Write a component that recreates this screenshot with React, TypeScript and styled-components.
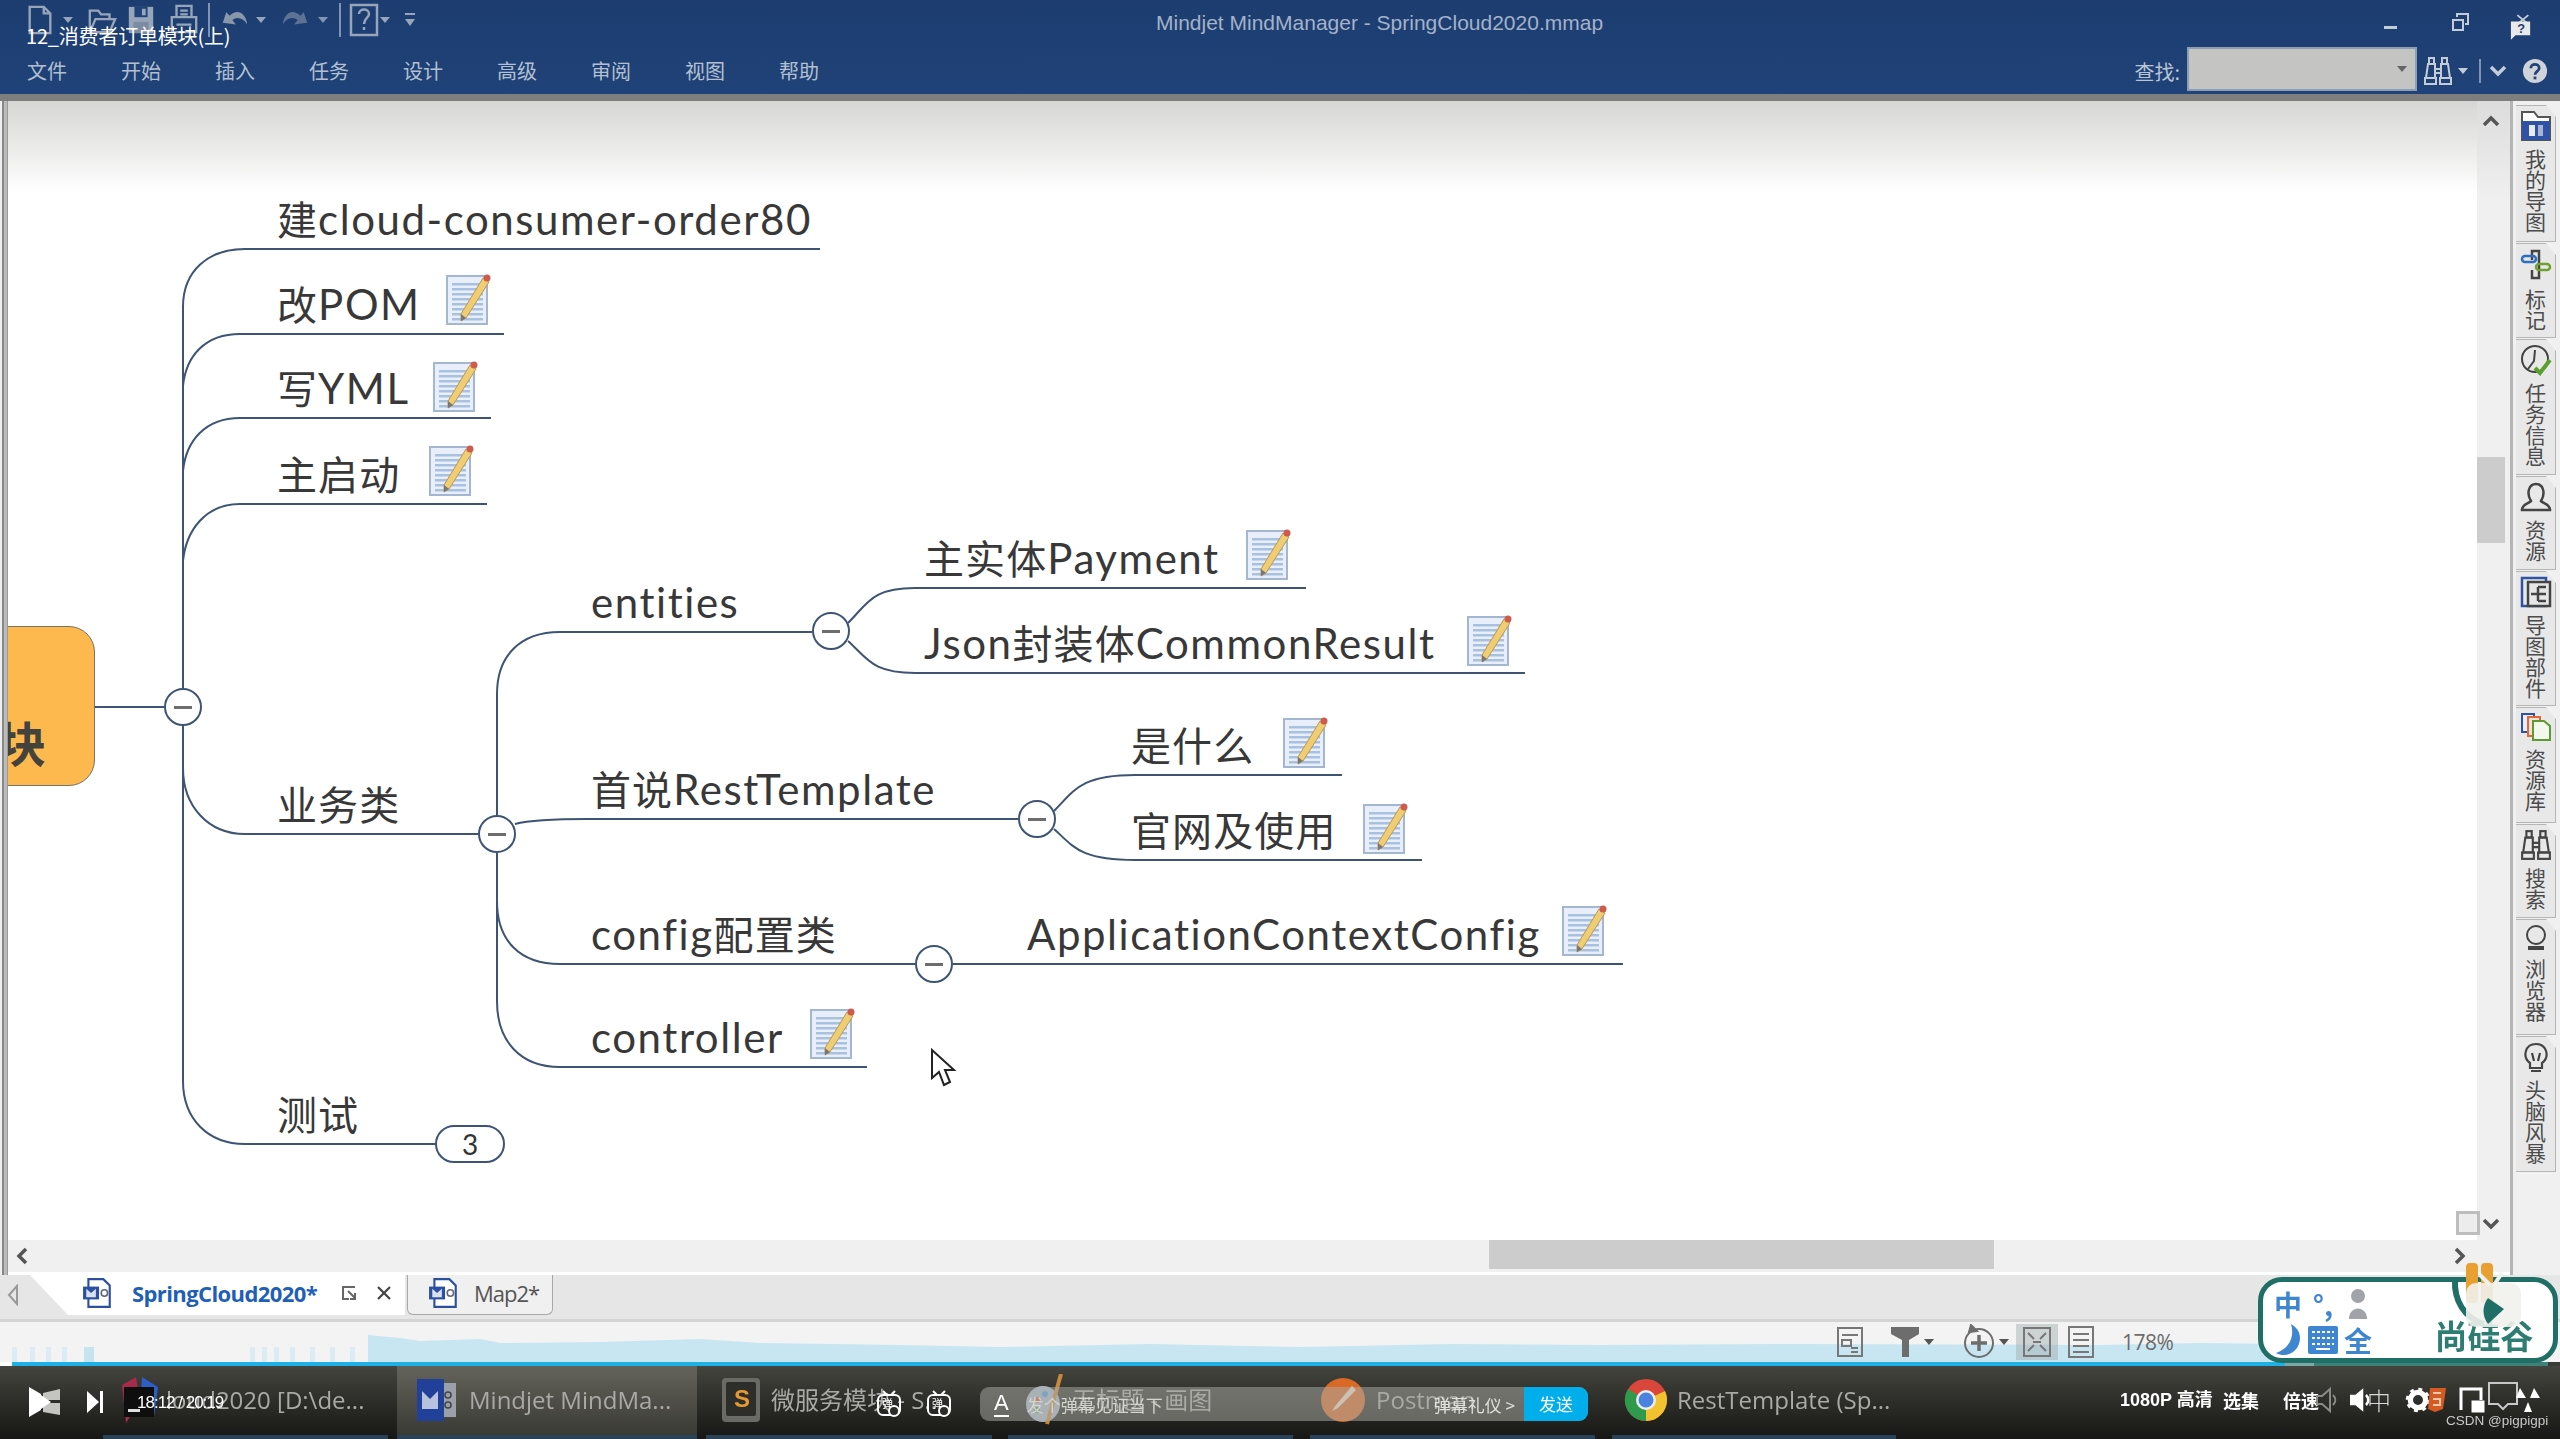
import React from "react";
import styled, { createGlobalStyle } from "styled-components";

const CJK = '"Noto Sans CJK SC", "Noto Sans", sans-serif';
const LATIN = 'Lato, "Noto Sans CJK SC", sans-serif';
const UI = '"Liberation Sans", "Noto Sans CJK SC", sans-serif';
const OX = 8;
const OY = 101;

const Global = createGlobalStyle`
  html, body { margin: 0; padding: 0; background: #fff; }
  #root { width: 2560px; height: 1439px; overflow: hidden; }
`;

const Frame = styled.div`
  position: relative;
  width: 2560px;
  height: 1439px;
  display: flex;
  flex-direction: column;
  overflow: hidden;
  font-family: ${CJK};
  filter: blur(0.45px);
`;

/* ---------- header ---------- */
const Header = styled.header`
  height: 94px;
  flex: none;
  display: flex;
  flex-direction: column;
  background: linear-gradient(180deg, #1d3d70 0%, #1f4278 100%);
`;
const TitleRow = styled.div`
  height: 44px;
  display: flex;
  align-items: center;
  position: relative;
`;
const Qat = styled.div`
  display: flex;
  align-items: center;
  padding: 0 0 5px 26px;
`;
const Slot = styled.span<{ $ml?: number; $mb?: number }>`
  display: flex;
  align-items: center;
  flex: none;
  margin-left: ${(p) => p.$ml ?? 0}px;
  margin-bottom: ${(p) => p.$mb ?? 0}px;
`;
const Title = styled.div`
  position: absolute;
  left: 1156px;
  top: 10px;
  font: 21px/26px ${UI};
  color: #a3b2c8;
  white-space: nowrap;
`;
const VideoTitle = styled.div`
  position: absolute;
  left: 26px;
  top: 23px;
  font: 20px/26px ${CJK};
  letter-spacing: -0.2px;
  color: #fff;
  white-space: nowrap;
`;
const WinControls = styled.div`
  margin-left: auto;
  height: 44px;
  box-sizing: border-box;
  display: flex;
  align-items: flex-end;
  padding: 0 28px 4px 0;
`;
const MenuRow = styled.nav`
  height: 50px;
  display: flex;
  align-items: center;
  padding: 4px 12px 0 27px;
  box-sizing: border-box;
`;
const MenuItem = styled.span`
  width: 94px;
  font-size: 20px;
  line-height: 26px;
  color: #b2c0d2;
`;
const FindLabel = styled.span`
  margin-left: auto;
  font-size: 20px;
  color: #b8c4d4;
  margin-right: 7px;
`;
const FindBox = styled.div`
  width: 230px;
  height: 44px;
  margin-top: -4px;
  box-sizing: border-box;
  background: #c4c4c2;
  border: 2px solid #8d9db4;
  display: flex;
  align-items: center;
  justify-content: flex-end;
  padding-right: 8px;
`;
const FindTools = styled.div`
  display: flex;
  align-items: center;
  padding-left: 6px;
`;
const Divider = styled.span`
  width: 2px;
  height: 24px;
  background: #7f93b2;
`;
const Caret = styled.span<{ $c?: string }>`
  display: block;
  width: 0;
  height: 0;
  border-left: 5px solid transparent;
  border-right: 5px solid transparent;
  border-top: 6px solid ${(p) => p.$c || "#c4ccd8"};
`;

/* ---------- main ---------- */
const Main = styled.main`
  height: 1181px;
  flex: none;
  display: flex;
  background: #f0f0f0;
  border-top: 7px solid #7e7e7e;
  box-sizing: border-box;
`;
const Workspace = styled.div`
  width: 2510px;
  display: flex;
  flex-direction: column;
  padding-left: 8px;
  box-sizing: border-box;
  background: linear-gradient(90deg, #eee 0 2px, #888 2px 4px, #bbb 4px 7px, #999 7px 8px);
`;
const ViewRow = styled.div`
  height: 1139px;
  display: flex;
`;
const Canvas = styled.div`
  position: relative;
  width: 2469px;
  overflow: hidden;
  background: linear-gradient(180deg, #d6d6d4 0, #fff 92px);
`;
const Wires = styled.svg`
  position: absolute;
  left: 0;
  top: 1px;
`;
const Central = styled.div`
  position: absolute;
  left: -30px;
  top: ${626 - OY}px;
  width: ${95 + 30 - OX}px;
  height: 160px;
  box-sizing: border-box;
  background: #fdb94e;
  border: 1px solid #77736a;
  border-radius: 26px;
  display: flex;
  align-items: flex-end;
  justify-content: flex-start;
  padding: 0 0 14px 19px;
  font: 700 48px/60px ${CJK};
  color: #44423c;
`;
const Topic = styled.div<{ $x: number; $line: number }>`
  position: absolute;
  left: ${(p) => p.$x - OX}px;
  top: ${(p) => p.$line - OY - 55}px;
  font: 40px/50px ${CJK};
  letter-spacing: 1.1px;
  color: #383838;
  white-space: nowrap;
`;
const LatinRun = styled.span`
  font-family: ${LATIN};
  font-size: 42px;
  letter-spacing: 1.55px;
`;
const NotePlace = styled.div<{ $x: number; $y: number }>`
  position: absolute;
  left: ${(p) => p.$x - OX}px;
  top: ${(p) => p.$y - OY}px;
  width: 46px;
  height: 52px;
`;
const Collapse = styled.div<{ $x: number; $y: number }>`
  position: absolute;
  left: ${(p) => p.$x - OX - 19}px;
  top: ${(p) => p.$y - OY - 18}px;
  width: 38px;
  height: 38px;
  box-sizing: border-box;
  border: 2px solid #3e5474;
  border-radius: 50%;
  background: #fff;
  display: flex;
  align-items: center;
  justify-content: center;
  &::after {
    content: "";
    width: 18px;
    height: 3px;
    background: #6d6d6d;
  }
`;
const CountBadge = styled.div`
  position: absolute;
  left: ${435 - OX}px;
  top: ${1125 - OY}px;
  width: 70px;
  height: 38px;
  box-sizing: border-box;
  border: 2px solid #3e5474;
  border-radius: 19px;
  background: #fff;
  font: 28px/34px ${LATIN};
  color: #333;
  text-align: center;
`;
const Pointer = styled.svg`
  position: absolute;
  left: ${929 - OX}px;
  top: ${1048 - OY}px;
`;
const VScroll = styled.div`
  width: 33px;
  display: flex;
  flex-direction: column;
  align-items: center;
  padding: 12px 5px 6px 0;
  box-sizing: border-box;
  background: linear-gradient(180deg, #dcdcdc 0, #f0f0f0 100px);
`;
const VThumb = styled.div`
  width: 28px;
  height: 86px;
  margin-top: 324px;
  background: #cccccc;
`;
const CornerRow = styled.div`
  margin-top: auto;
  display: flex;
  align-items: center;
  position: relative;
`;
const ResizeBox = styled.div`
  position: absolute;
  right: 21px;
  top: -3px;
  width: 24px;
  height: 24px;
  box-sizing: border-box;
  border: 3px solid #bdbdbd;
  background: #ececec;
`;
const HScroll = styled.div`
  height: 32px;
  display: flex;
  align-items: center;
  padding: 0 41px 0 5px;
  background: #f0f0f0;
  border-bottom: 3px solid #fff;
  box-sizing: content-box;
`;
const HThumb = styled.div`
  width: 505px;
  height: 29px;
  margin: 0 auto 3px 1456px;
  background: #cccccc;
`;

/* ---------- sidebar ---------- */
const SideBar = styled.aside`
  width: 50px;
  box-sizing: border-box;
  padding: 4px 4px 0 3px;
  display: flex;
  flex-direction: column;
  gap: 1px;
  background: #f0f0f0;
  border-left: 3px solid #b4b4b4;
`;
const SideTab = styled.div<{ $h: number }>`
  height: ${(p) => p.$h}px;
  flex: none;
  box-sizing: border-box;
  display: flex;
  flex-direction: column;
  align-items: center;
  padding-top: 4px;
  background: #e8e8e8;
  border: 1px solid #b5b5b5;
  border-left: none;
  clip-path: polygon(0 0, 30px 0, 100% 12px, 100% 100%, 0 100%);
`;
const SideLabel = styled.span`
  writing-mode: vertical-rl;
  text-orientation: upright;
  white-space: nowrap;
  font-size: 21px;
  line-height: 24px;
  letter-spacing: 0;
  margin-top: 7px;
  color: #4c4c4c;
`;

/* ---------- tabs & status ---------- */
const TabRow = styled.div`
  position: relative;
  height: 47px;
  flex: none;
  display: flex;
  align-items: flex-start;
  background: #e6e6e6;
  border-bottom: 3px solid #d4d4d4;
  box-sizing: border-box;
`;
const TabArrow = styled.div`
  width: 30px;
  height: 40px;
  display: flex;
  align-items: center;
  padding-left: 7px;
  box-sizing: border-box;
`;
const ActiveTab = styled.div`
  width: 375px;
  height: 40px;
  display: flex;
  align-items: center;
  box-sizing: border-box;
  padding: 0 0 4px 52px;
  background: #fff;
  clip-path: polygon(0 0, 100% 0, 100% 100%, 38px 100%);
  font: 700 22px/30px "Open Sans", ${UI};
  color: #1f5fb8;
`;
const TabName = styled.span`
  margin-left: 18px;
  width: 210px;
  letter-spacing: -0.6px;
  white-space: nowrap;
`;
const OtherTab = styled.div`
  margin-left: 2px;
  width: 146px;
  height: 40px;
  box-sizing: border-box;
  display: flex;
  align-items: center;
  padding: 0 0 4px 20px;
  background: #f0f0f0;
  border: 1px solid #a8a8a8;
  border-top: none;
  border-radius: 0 0 6px 6px;
  font: 22px/30px "Open Sans", ${UI};
  color: #555;
`;
const OtherName = styled.span`
  margin-left: 14px;
  letter-spacing: -1px;
`;
const StatusRow = styled.div`
  position: relative;
  height: 40px;
  flex: none;
  background: #f3f3f3;
  display: flex;
  align-items: center;
  padding-left: 1836px;
`;
const Wave = styled.svg`
  position: absolute;
  left: 0;
  top: 0;
`;
const ToolSlot = styled.div<{ $w: number; $on?: boolean; $ml?: number }>`
  position: relative;
  width: ${(p) => p.$w}px;
  height: 36px;
  margin-left: ${(p) => p.$ml ?? 0}px;
  display: flex;
  align-items: center;
  justify-content: center;
  gap: 4px;
  background: ${(p) => (p.$on ? "rgba(160,170,170,0.45)" : "transparent")};
`;
const Zoom = styled.span`
  position: relative;
  margin-left: 24px;
  font: 21px/26px "Open Sans", ${UI};
  color: #6b6b6b;
  letter-spacing: -0.5px;
`;
const Progress = styled.div`
  height: 4px;
  flex: none;
  background: linear-gradient(90deg, #fff 0 12px, #1fb0e6 12px 2285px, #7da9a4 2285px 2314px, #3f8077 2314px 2548px, #3a3a36 2548px);
`;

/* ---------- taskbar ---------- */
const TaskBar = styled.footer`
  position: relative;
  height: 73px;
  flex: none;
  display: flex;
  padding-left: 103px;
  background: linear-gradient(180deg, #45453f 0%, #2c2c28 50%, #171715 100%);
`;
const TaskItem = styled.div<{ $w: number; $on?: boolean; $pad?: number; $gap?: number; $ml?: number }>`
  width: ${(p) => p.$w}px;
  margin-left: ${(p) => p.$ml ?? 0}px;
  box-sizing: border-box;
  display: flex;
  align-items: center;
  gap: ${(p) => p.$gap ?? 10}px;
  padding: 0 0 2px ${(p) => p.$pad ?? 14}px;
  border-bottom: 4px solid #2a4258;
  background: ${(p) => (p.$on ? "linear-gradient(180deg,#64635b,#3a3a35)" : "transparent")};
  font: 24px/32px "Open Sans", ${UI};
  color: #a9a9a5;
  white-space: nowrap;
  overflow: hidden;
`;
const PlayBtn = styled.div`
  position: absolute;
  left: 29px;
  top: 21px;
  display: flex;
  align-items: center;
  gap: 25px;
`;
const TimeText = styled.span`
  position: absolute;
  left: 137px;
  top: 26px;
  font: 17px/22px ${UI};
  letter-spacing: -1px;
  color: #fff;
  white-space: nowrap;
`;
const DanmakuToggle = styled.div`
  position: absolute;
  left: 876px;
  top: 24px;
  display: flex;
  gap: 24px;
`;
const DanmakuBar = styled.div`
  position: absolute;
  left: 980px;
  top: 21px;
  width: 608px;
  height: 34px;
  display: flex;
  align-items: center;
  border-radius: 9px;
  overflow: hidden;
  background: rgba(170, 170, 165, 0.52);
  color: #e8e8e8;
`;
const DanmakuA = styled.span`
  margin-left: 14px;
  font: 22px/24px ${UI};
  border-bottom: 2px solid #fff;
  height: 24px;
  color: #fff;
`;
const DanmakuHint = styled.span`
  margin-left: 18px;
  font-size: 17px;
  color: #d4d4d0;
`;
const DanmakuRule = styled.span`
  margin-left: auto;
  margin-right: 9px;
  font-size: 17px;
  color: #e0e0dc;
`;
const SendBtn = styled.div`
  width: 64px;
  height: 34px;
  background: #00aeec;
  color: #fff;
  font: 17px/34px ${CJK};
  text-align: center;
`;
const PlayerTools = styled.div`
  position: absolute;
  left: 2120px;
  top: 16px;
  height: 36px;
  display: flex;
  align-items: center;
  color: #fff;
  font-weight: 700;
  font-size: 18px;
  line-height: 26px;
`;
const ToolText = styled.span<{ $w: number; $b?: boolean }>`
  width: ${(p) => p.$w}px;
  flex: none;
  white-space: nowrap;
  font-family: ${(p) => (p.$b ? UI : CJK)};
`;
const ImeChar = styled.span`
  margin-left: -5px;
  width: 24px;
  flex: none;
  font-weight: 300;
  font-size: 24px;
  color: #d8d8d8;
`;
const Watermark = styled.span`
  position: absolute;
  left: 2446px;
  top: 46px;
  font: 13.5px/18px ${UI};
  color: #c8c8c8;
  white-space: nowrap;
`;

/* ---------- logo overlay ---------- */
const LogoBox = styled.div`
  position: absolute;
  left: 2258px;
  top: 1277px;
  width: 300px;
  height: 86px;
  box-sizing: border-box;
  border: 5px solid #1f6f66;
  border-radius: 24px;
  background: #fff;
  display: flex;
  padding: 4px 17px 0 10px;
`;
const ImeGrid = styled.div`
  width: 120px;
  display: grid;
  grid-template-columns: repeat(3, 30px);
  grid-auto-rows: 36px;
  gap: 0 5px;
  align-items: center;
  justify-items: center;
  color: #3e86d0;
  font: 700 28px/36px ${CJK};
`;
const Brand = styled.div`
  margin-left: auto;
  width: 104px;
  display: flex;
  flex-direction: column;
  align-items: center;
  justify-content: flex-end;
  padding-bottom: 4px;
  font: 700 33px/38px ${CJK};
  color: #2e7d72;
  white-space: nowrap;
`;
const BrandMark = styled.svg`
  position: absolute;
  left: 2450px;
  top: 1258px;
`;

/* ---------- drawings ---------- */
const NoteIcon = () => (
  <svg width="46" height="52" viewBox="0 0 46 52">
    <rect x="1" y="3" width="40" height="48" fill="#e8eefa" stroke="#a3b6d2" strokeWidth="2" />
    {[10, 15, 20, 25, 30, 35, 40, 45].map((y) => (
      <rect key={y} x="6" y={y} width="31" height="2.5" fill="#a9c1e0" />
    ))}
    <path d="M37 5 L43 9 L20 45 L15 48 L15 41 Z" fill="#f0cc72" stroke="#b69a55" strokeWidth="1" />
    <path d="M15 41 L20 45 L15 48 Z" fill="#777" />
    <circle cx="41" cy="5" r="3.5" fill="#cf5b4c" />
  </svg>
);

const DocMini = () => (
  <svg width="32" height="32" viewBox="0 0 30 30">
    <path d="M6 2 H20 L26 8 V28 H6 Z" fill="#fff" stroke="#2c50a0" strokeWidth="2" />
    <rect x="1" y="9" width="15" height="12" fill="#2c50a0" />
    <path d="M4 11 L8.5 15 L13 11 V19 H4 Z" fill="#d8e0f0" />
    <circle cx="21" cy="15" r="3" fill="none" stroke="#667" strokeWidth="1.5" />
  </svg>
);

const Chevron = ({ d, c = "#555" }: { d: "u" | "d" | "l" | "r"; c?: string }) => {
  const paths = {
    u: "M3 12 L10 5 L17 12",
    d: "M3 6 L10 13 L17 6",
    l: "M13 3 L6 10 L13 17",
    r: "M7 3 L14 10 L7 17",
  };
  return (
    <svg width="20" height="20" viewBox="0 0 20 20">
      <path d={paths[d]} fill="none" stroke={c} strokeWidth="3.5" />
    </svg>
  );
};

const Binoculars = ({ c = "#c4ccd8", s = 30 }: { c?: string; s?: number }) => (
  <svg width={s} height={s} viewBox="0 0 30 30" fill="none" stroke={c} strokeWidth="2">
    <rect x="6" y="2" width="5" height="6" />
    <rect x="19" y="2" width="5" height="6" />
    <path d="M5 8 H12 V22 H3 Z M18 8 H25 L27 22 H18 Z M12 13 H18 M12 17 H18" />
    <rect x="2" y="22" width="11" height="6" />
    <rect x="17" y="22" width="11" height="6" />
  </svg>
);

const QC = "#97a5ba";
const QatIcons = () => (
  <>
    <Slot>
      <svg width="28" height="30" viewBox="0 0 28 32" fill="none" stroke={QC} strokeWidth="2.5">
        <path d="M3 2 H18 L25 9 V30 H3 Z M18 2 V9 H25" />
      </svg>
    </Slot>
    <Slot $ml={9}><Caret $c={QC} /></Slot>
    <Slot $ml={13}>
      <svg width="32" height="30" viewBox="0 0 32 32" fill="none" stroke={QC} strokeWidth="2.5">
        <path d="M3 29 V6 H12 L15 10 H24 V15 M3 29 L9 15 H30 L24 29 Z" />
      </svg>
    </Slot>
    <Slot $ml={8}>
      <svg width="30" height="30" viewBox="0 0 30 32">
        <path d="M2 2 H28 V30 H2 Z" fill={QC} />
        <rect x="8" y="2" width="14" height="11" fill="#1f4278" />
        <rect x="16" y="4" width="4" height="7" fill={QC} />
        <rect x="7" y="18" width="16" height="12" fill="#7d8ba0" />
      </svg>
    </Slot>
    <Slot $ml={13}>
      <svg width="30" height="32" viewBox="0 0 32 34" fill="none" stroke={QC} strokeWidth="2.5">
        <path d="M8 14 V2 H24 V14 M3 14 H29 V30 H3 Z M12 7 H20 M12 11 H20 M8 22 H24" />
      </svg>
    </Slot>
    <Slot $ml={9}><svg width="2" height="34"><rect width="2" height="34" fill="#7f93b2" /></svg></Slot>
    <Slot $ml={11}>
      <svg width="28" height="28" viewBox="0 0 32 30">
        <path d="M2 18 L6 6 L10 10 C18 2 28 6 30 20 C25 12 18 11 13 15 L17 20 Z" fill="#8997ab" />
      </svg>
    </Slot>
    <Slot $ml={7}><Caret $c={QC} /></Slot>
    <Slot $ml={15}>
      <svg width="28" height="28" viewBox="0 0 32 30">
        <path d="M30 18 L26 6 L22 10 C14 2 4 6 2 20 C7 12 14 11 19 15 L15 20 Z" fill="#5d7294" />
      </svg>
    </Slot>
    <Slot $ml={9}><Caret $c="#7f93b2" /></Slot>
    <Slot $ml={11}><svg width="2" height="34"><rect width="2" height="34" fill="#7f93b2" /></svg></Slot>
    <Slot $ml={8}>
      <svg width="30" height="34" viewBox="0 0 30 34" fill="none" stroke={QC} strokeWidth="2.5">
        <rect x="2" y="2" width="26" height="30" />
        <path d="M10 11 C10 5 20 5 20 11 C20 15 15 15 15 21 M15 24 V27" />
      </svg>
    </Slot>
    <Slot $ml={1}><Caret $c={QC} /></Slot>
    <Slot $ml={13}>
      <svg width="14" height="18" viewBox="0 0 14 18">
        <rect x="2" y="2" width="10" height="2" fill={QC} />
        <path d="M2 8 H12 L7 15 Z" fill={QC} />
      </svg>
    </Slot>
  </>
);

const sideTabs: { h: number; label: string; icon: React.ReactNode }[] = [
  {
    h: 137,
    label: "我的导图",
    icon: (
      <svg width="32" height="32" viewBox="0 0 32 32">
        <path d="M2 30 V2 H14 L18 7 H30 V30 Z" fill="#fff" stroke="#555" strokeWidth="2" />
        <rect x="2" y="11" width="28" height="19" fill="#2f52a4" />
        <rect x="9" y="15" width="6" height="11" fill="#e8eaf2" />
        <rect x="18" y="15" width="5" height="11" fill="#a7b4d6" />
      </svg>
    ),
  },
  {
    h: 95,
    label: "标记",
    icon: (
      <svg width="32" height="34" viewBox="0 0 32 34" fill="none" strokeWidth="2.5">
        <path d="M12 12 V3 H19 V30 H12 V22" stroke="#444" />
        <rect x="2" y="8" width="14" height="6" rx="3" stroke="#2e6fc0" />
        <rect x="16" y="16" width="14" height="6" rx="3" stroke="#6fa030" />
      </svg>
    ),
  },
  {
    h: 136,
    label: "任务信息",
    icon: (
      <svg width="32" height="32" viewBox="0 0 32 32" fill="none">
        <circle cx="15" cy="15" r="13" stroke="#444" strokeWidth="2" />
        <path d="M15 6 L14 17 L8 25" stroke="#444" strokeWidth="2" />
        <path d="M15 24 L20 29 L30 16" stroke="#5aa02c" strokeWidth="4" />
      </svg>
    ),
  },
  {
    h: 94,
    label: "资源",
    icon: (
      <svg width="32" height="32" viewBox="0 0 32 32" fill="none" stroke="#444" strokeWidth="2.5">
        <path d="M11 20 C6 12 9 3 16 3 C23 3 26 12 21 20 C24 23 30 23 30 29 H2 C2 23 8 23 11 20 Z" />
      </svg>
    ),
  },
  {
    h: 135,
    label: "导图部件",
    icon: (
      <svg width="32" height="32" viewBox="0 0 32 32" fill="none" stroke="#444" strokeWidth="2.5">
        <rect x="2" y="2" width="24" height="28" stroke="#2f52a4" />
        <rect x="8" y="6" width="22" height="24" fill="#e6e6e6" />
        <path d="M11 18 H18 M18 11 V25 M18 11 H26 M18 18 H26 M18 25 H26" />
      </svg>
    ),
  },
  {
    h: 116,
    label: "资源库",
    icon: (
      <svg width="32" height="30" viewBox="0 0 32 30" strokeWidth="2">
        <path d="M2 2 H14 V20 H2 Z" fill="#e8eefc" stroke="#2f52a4" />
        <path d="M8 5 H20 V24 H8 Z" fill="#fbe0d6" stroke="#e0683c" />
        <path d="M13 9 H24 L30 14 V28 H13 Z" fill="#f3f8ec" stroke="#5d9a34" />
      </svg>
    ),
  },
  { h: 94, label: "搜索", icon: <Binoculars c="#444" s={32} /> },
  {
    h: 116,
    label: "浏览器",
    icon: (
      <svg width="32" height="28" viewBox="0 0 32 28" fill="none" stroke="#444" strokeWidth="2">
        <circle cx="16" cy="11" r="9" />
        <path d="M8 24 H24" strokeWidth="4" />
      </svg>
    ),
  },
  {
    h: 136,
    label: "头脑风暴",
    icon: (
      <svg width="32" height="32" viewBox="0 0 32 32" fill="none" stroke="#444" strokeWidth="2.2">
        <path d="M10 22 C2 16 5 3 16 3 C27 3 30 16 22 22 V27 H10 Z" />
        <path d="M12 12 L14 20 M20 12 L18 20 M11 30 H21" />
      </svg>
    ),
  },
];

const wires = [
  "M183 306 V687 M183 725 V1080",
  "M183 306 C183 270 208 248 245 248 H820",
  "M183 385 C186 355 205 333 240 333 H504",
  "M183 470 C186 440 205 417 240 417 H491",
  "M183 560 C186 530 205 503 240 503 H487",
  "M95 706 H165",
  "M183 767 C183 805 208 833 245 833 H478",
  "M183 1080 C183 1118 208 1143 245 1143 H436",
  "M497 693 V814 M497 852 V1000",
  "M497 693 C497 655 520 631 560 631 H812",
  "M515 823 C530 819 550 818 588 818 H1018",
  "M497 900 C497 940 520 963 560 963 H915",
  "M953 963 H1623",
  "M497 1000 C497 1040 520 1066 560 1066 H867",
  "M848 622 C868 602 872 587 915 587 H1306",
  "M848 640 C868 658 872 672 915 672 H1525",
  "M1054 810 C1074 790 1080 774 1135 774 H1342",
  "M1054 828 C1074 846 1080 859 1135 859 H1422",
];

const topics: { x: number; line: number; text: string }[] = [
  { x: 277, line: 248, text: "建cloud-consumer-order80" },
  { x: 277, line: 333, text: "改POM" },
  { x: 277, line: 417, text: "写YML" },
  { x: 277, line: 503, text: "主启动" },
  { x: 277, line: 833, text: "业务类" },
  { x: 277, line: 1143, text: "测试" },
  { x: 591, line: 631, text: "entities" },
  { x: 591, line: 818, text: "首说RestTemplate" },
  { x: 591, line: 963, text: "config配置类" },
  { x: 591, line: 1066, text: "controller" },
  { x: 924, line: 587, text: "主实体Payment" },
  { x: 924, line: 672, text: "Json封装体CommonResult" },
  { x: 1131, line: 774, text: "是什么" },
  { x: 1131, line: 859, text: "官网及使用" },
  { x: 1027, line: 963, text: "ApplicationContextConfig" },
];

const notes = [
  [446, 273],
  [433, 360],
  [429, 444],
  [1246, 528],
  [1467, 614],
  [1283, 716],
  [1363, 802],
  [1562, 904],
  [810, 1007],
];

const collapses = [
  [183, 706],
  [497, 833],
  [831, 630],
  [1037, 818],
  [934, 963],
];

const TopicText = ({ text }: { text: string }) => (
  <>
    {text.split(/([\x00-\x7f]+)/).map((part, i) =>
      i % 2 === 1 ? <LatinRun key={i}>{part}</LatinRun> : part
    )}
  </>
);

const MindMap = () => (
  <>
    <Wires width="2469" height="1139" viewBox={`${OX} ${OY} 2469 1139`} fill="none" stroke="#3e5474" strokeWidth="2">
      {wires.map((d) => (
        <path key={d} d={d} />
      ))}
    </Wires>
    <Central>块</Central>
    {topics.map((t) => (
      <Topic key={t.text} $x={t.x} $line={t.line}>
        <TopicText text={t.text} />
      </Topic>
    ))}
    {notes.map(([x, y]) => (
      <NotePlace key={`${x}-${y}`} $x={x} $y={y}>
        <NoteIcon />
      </NotePlace>
    ))}
    {collapses.map(([x, y]) => (
      <Collapse key={`${x}-${y}`} $x={x} $y={y} />
    ))}
    <CountBadge>3</CountBadge>
    <Pointer width="28" height="40" viewBox="0 0 28 40">
      <path d="M3 2 V30 L10 24 L15 37 L21 34 L16 22 L25 22 Z" fill="#fff" stroke="#222" strokeWidth="2" />
    </Pointer>
  </>
);

const WaveChart = () => (
  <Wave width="2560" height="40" viewBox="0 1322 2560 40">
    {[12, 30, 46, 62, 250, 262, 274, 290, 310, 330, 350].map((x) => (
      <rect key={x} x={x} y="1347" width="5" height="15" fill="#dcecf4" />
    ))}
    <rect x="84" y="1347" width="10" height="15" fill="#c6e4f0" />
    <path
      d="M368 1362 V1335 L400 1338 L420 1341 L480 1339 L500 1343 L600 1342 L700 1339 L760 1343 L900 1345 L1000 1347 L1150 1344 L1300 1347 L1450 1344 L1600 1345 L1800 1344 L2100 1345 L2200 1343 L2285 1344 V1362 Z"
      fill="#c8e6f1"
    />
  </Wave>
);

export default function App() {
  return (
    <Frame>
      <Global />
      <Header>
        <TitleRow>
          <Qat>
            <QatIcons />
          </Qat>
          <Title>Mindjet MindManager - SpringCloud2020.mmap</Title>
          <VideoTitle>12_消费者订单模块(上)</VideoTitle>
          <WinControls>
            <Slot $mb={10}>
              <svg width="13" height="4"><rect width="13" height="3" fill="#c4ccd8" /></svg>
            </Slot>
            <Slot $ml={55} $mb={8}>
              <svg width="18" height="20" viewBox="0 0 18 20" fill="none" stroke="#c4ccd8" strokeWidth="2">
                <rect x="1" y="8" width="10" height="10" />
                <path d="M5 5 V2 H16 V12 H13" />
              </svg>
            </Slot>
            <Slot $ml={40}>
              <svg width="22" height="26" viewBox="0 0 24 28">
                <path d="M8 1 L20 11 M20 1 L8 11" stroke="#c4ccd8" strokeWidth="2" />
                <path d="M1 8 H22 V23 H6 L1 28 Z" fill="#e8e8e8" />
                <text x="8" y="21" fontSize="14" fontWeight="700" fill="#1d3d70" fontFamily="Liberation Sans">?</text>
              </svg>
            </Slot>
          </WinControls>
        </TitleRow>
        <MenuRow>
          {["文件", "开始", "插入", "任务", "设计", "高级", "审阅", "视图", "帮助"].map((m) => (
            <MenuItem key={m}>{m}</MenuItem>
          ))}
          <FindLabel>查找:</FindLabel>
          <FindBox>
            <Caret $c="#666" />
          </FindBox>
          <FindTools>
            <Binoculars />
            <Slot $ml={5}><Caret /></Slot>
            <Slot $ml={11}><Divider /></Slot>
            <Slot $ml={7}><Chevron d="d" c="#c4ccd8" /></Slot>
            <Slot $ml={14}>
              <svg width="26" height="26" viewBox="0 0 28 28">
                <circle cx="14" cy="14" r="13" fill="#d0d4da" />
                <path d="M9.5 11 C9.5 5.5 18.5 5.5 18.5 11 C18.5 14.5 14 14.5 14 18" fill="none" stroke="#1f4278" strokeWidth="3" />
                <rect x="12.5" y="20" width="3" height="3" fill="#1f4278" />
              </svg>
            </Slot>
          </FindTools>
        </MenuRow>
      </Header>

      <Main>
        <Workspace>
          <ViewRow>
            <Canvas>
              <MindMap />
            </Canvas>
            <VScroll>
              <Chevron d="u" />
              <VThumb />
              <CornerRow>
                <ResizeBox />
                <Chevron d="d" />
              </CornerRow>
            </VScroll>
          </ViewRow>
          <HScroll>
            <Chevron d="l" />
            <HThumb />
            <Chevron d="r" />
          </HScroll>
        </Workspace>
        <SideBar>
          {sideTabs.map((t) => (
            <SideTab key={t.label} $h={t.h}>
              {t.icon}
              <SideLabel>{t.label}</SideLabel>
            </SideTab>
          ))}
        </SideBar>
      </Main>

      <TabRow>
        <TabArrow>
          <svg width="12" height="22" viewBox="0 0 12 22" fill="none" stroke="#999" strokeWidth="2">
            <path d="M10 2 L2 11 L10 20 Z" />
          </svg>
        </TabArrow>
        <ActiveTab>
          <DocMini />
          <TabName>SpringCloud2020*</TabName>
          <svg width="14" height="16" viewBox="0 0 14 16" fill="none" stroke="#666" strokeWidth="2">
            <path d="M13 2 H1 V14 H7 M6 6 L13 13 M13 8 V14 H8" />
          </svg>
          <Slot $ml={20}>
            <svg width="16" height="16" viewBox="0 0 16 16" stroke="#444" strokeWidth="2.2">
              <path d="M2 2 L14 14 M14 2 L2 14" />
            </svg>
          </Slot>
        </ActiveTab>
        <OtherTab>
          <DocMini />
          <OtherName>Map2*</OtherName>
        </OtherTab>
      </TabRow>

      <StatusRow>
        <WaveChart />
        <ToolSlot $w={28}>
          <svg width="26" height="32" viewBox="0 0 26 32" fill="none" stroke="#777" strokeWidth="2">
            <rect x="1" y="2" width="24" height="28" />
            <path d="M5 9 H21 M5 14 H14 V20 H5 Z M14 22 H21 M14 26 H21" />
          </svg>
        </ToolSlot>
        <ToolSlot $w={58} $ml={19}>
          <svg width="30" height="34" viewBox="0 0 30 34">
            <path d="M1 2 H29 V9 L19 15 V32 H12 V15 L1 9 Z" fill="#6d6d6d" />
          </svg>
          <Caret $c="#555" />
        </ToolSlot>
        <ToolSlot $w={60} $ml={15}>
          <svg width="32" height="36" viewBox="0 0 32 36" fill="none" stroke="#6d6d6d" strokeWidth="2">
            <circle cx="16" cy="19" r="14" />
            <path d="M16 11 V27 M8 19 H24" strokeWidth="3.5" />
            <path d="M8 1 L14 7 L6 8 Z" fill="#6d6d6d" />
          </svg>
          <Caret $c="#555" />
        </ToolSlot>
        <ToolSlot $w={42} $on>
          <svg width="28" height="30" viewBox="0 0 28 30" fill="none" stroke="#777" strokeWidth="2">
            <rect x="1" y="1" width="26" height="28" />
            <path d="M5 6 L11 12 M23 6 L17 12 M5 24 L11 18 M23 24 L17 18 M10 15 H18" />
          </svg>
        </ToolSlot>
        <ToolSlot $w={34} $ml={6}>
          <svg width="26" height="32" viewBox="0 0 26 32" fill="none" stroke="#777" strokeWidth="2">
            <rect x="1" y="1" width="24" height="30" />
            <path d="M5 8 H21 M5 14 H21 M5 20 H21 M5 26 H21" />
          </svg>
        </ToolSlot>
        <Zoom>178%</Zoom>
      </StatusRow>
      <Progress />

      <TaskBar>
        <TaskItem $w={285} $pad={17} $gap={8}>
          <svg width="38" height="46" viewBox="0 0 38 46">
            <path d="M2 8 L16 0 L20 24 L6 46 Z" fill="#a62a4a" />
            <path d="M22 0 L38 10 L34 40 L20 30 Z" fill="#2c5ec8" />
            <rect x="4" y="10" width="30" height="30" fill="#0e0e0e" />
            <rect x="8" y="32" width="12" height="3" fill="#ddd" />
          </svg>
          <span>loud2020 [D:\de...</span>
        </TaskItem>
        <TaskItem $w={300} $on $pad={19} $ml={9} $gap={11}>
          <svg width="42" height="44" viewBox="0 0 42 44">
            <rect x="24" y="5" width="16" height="34" fill="#9aa0aa" />
            <circle cx="32" cy="17" r="3" fill="none" stroke="#444" strokeWidth="1.5" />
            <circle cx="32" cy="27" r="3" fill="none" stroke="#444" strokeWidth="1.5" />
            <rect x="1" y="1" width="27" height="42" fill="#20409a" />
            <path d="M6 13 L14 21 L22 13 V31 H6 Z" fill="#b8c2dc" />
          </svg>
          <span>Mindjet MindMa...</span>
        </TaskItem>
        <TaskItem $w={286} $gap={9} $ml={9}>
          <svg width="42" height="48" viewBox="0 0 42 48">
            <rect x="2" y="2" width="38" height="44" rx="4" fill="#6b6b66" />
            <rect x="6" y="6" width="30" height="34" rx="2" fill="#2d2d2a" />
            <text x="14" y="31" fontSize="24" fontWeight="700" fill="#e49a32" fontFamily="Liberation Sans">S</text>
          </svg>
          <span>微服务模块 - S...</span>
        </TaskItem>
        <TaskItem $w={285} $pad={17} $gap={7} $ml={16}>
          <svg width="40" height="52" viewBox="0 0 40 52">
            <ellipse cx="18" cy="30" rx="17" ry="18" fill="#a8b8c8" />
            <circle cx="12" cy="26" r="3" fill="#d65f3c" />
            <circle cx="20" cy="20" r="3" fill="#4d9be0" />
            <circle cx="12" cy="36" r="3" fill="#64a844" />
            <path d="M36 0 L22 50" stroke="#c78a3c" strokeWidth="4" />
          </svg>
          <span>无标题 - 画图</span>
        </TaskItem>
        <TaskItem $w={285} $pad={10} $gap={10} $ml={17}>
          <svg width="46" height="46" viewBox="0 0 46 46">
            <circle cx="23" cy="23" r="22" fill="#d86a26" />
            <path d="M32 9 L16 28 L12 34 L18 31 L36 13 Z" fill="#f2d8c4" />
          </svg>
          <span>Postman</span>
        </TaskItem>
        <TaskItem $w={284} $pad={12} $gap={9} $ml={17}>
          <svg width="44" height="44" viewBox="0 0 44 44">
            <circle cx="22" cy="22" r="21" fill="#d8473a" />
            <path d="M22 22 L4 11 A21 21 0 0 0 22 43 Z" fill="#2f9a4c" />
            <path d="M22 22 L22 43 A21 21 0 0 0 41 13 Z" fill="#f2c32e" />
            <circle cx="22" cy="22" r="10" fill="#eee" />
            <circle cx="22" cy="22" r="7.5" fill="#4a84e0" />
          </svg>
          <span>RestTemplate (Sp...</span>
        </TaskItem>

        <PlayBtn>
          <svg width="32" height="30" viewBox="0 0 32 30">
            <path d="M0 0 L12 7 V23 L0 30 Z" fill="#fff" />
            <path d="M14 6 L31 2 V13 H14 Z M14 16 H31 V28 L14 25 Z" fill="#c4c4c0" />
            <path d="M12 8 L22 15 L12 22 Z" fill="#fff" />
          </svg>
          <svg width="18" height="24" viewBox="0 0 18 24">
            <path d="M1 1 L13 12 L1 23 Z" fill="#fff" />
            <rect x="14" y="1" width="3" height="22" fill="#fff" />
          </svg>
        </PlayBtn>
        <TimeText>18:12 / 20:19</TimeText>
        <DanmakuToggle>
          <svg width="26" height="28" viewBox="0 0 26 28" fill="none" stroke="#fff" strokeWidth="2">
            <path d="M7 1 L11 5 M19 1 L15 5" />
            <rect x="2" y="5" width="22" height="20" rx="5" />
            <circle cx="18" cy="21" r="5" fill="#2c2c28" />
            <text x="6" y="18" fontSize="11" stroke="none" fill="#fff" fontFamily="Noto Sans CJK SC">弹</text>
          </svg>
          <svg width="26" height="28" viewBox="0 0 26 28" fill="none" stroke="#fff" strokeWidth="2">
            <path d="M7 1 L11 5 M19 1 L15 5" />
            <rect x="2" y="5" width="22" height="20" rx="5" />
            <circle cx="18" cy="21" r="5" fill="#2c2c28" />
            <text x="6" y="18" fontSize="11" stroke="none" fill="#fff" fontFamily="Noto Sans CJK SC">弹</text>
          </svg>
        </DanmakuToggle>
        <DanmakuBar>
          <DanmakuA>A</DanmakuA>
          <DanmakuHint>发个弹幕见证当下</DanmakuHint>
          <DanmakuRule>弹幕礼仪 &gt;</DanmakuRule>
          <SendBtn>发送</SendBtn>
        </DanmakuBar>
        <PlayerTools>
          <ToolText $w={103} $b>1080P 高清</ToolText>
          <ToolText $w={60}>选集</ToolText>
          <ToolText $w={34}>倍速</ToolText>
          <Slot $ml={-2}>
            <svg width="24" height="30" viewBox="0 0 24 30" fill="none" stroke="#8a8a86" strokeWidth="2">
              <path d="M2 11 H7 L15 4 V26 L7 19 H2 Z" />
              <path d="M18 10 C21 13 21 17 18 20" />
            </svg>
          </Slot>
          <Slot $ml={11}>
            <svg width="22" height="24" viewBox="0 0 22 24" fill="none" stroke="#fff" strokeWidth="2.5">
              <path d="M1 8 H6 L12 3 V21 L6 16 H1 Z" fill="#fff" />
              <path d="M16 7 C19 10 19 14 16 17" />
            </svg>
          </Slot>
          <ImeChar>中</ImeChar>
          <Slot $ml={14}>
            <svg width="26" height="26" viewBox="0 0 34 34">
              <circle cx="17" cy="17" r="10" fill="none" stroke="#fff" strokeWidth="7" />
              <circle cx="17" cy="17" r="14" fill="none" stroke="#fff" strokeWidth="4" strokeDasharray="5 6" />
            </svg>
          </Slot>
          <Slot $ml={-4}>
            <svg width="20" height="26" viewBox="0 0 20 26">
              <path d="M3 1 H19 L16 22 L8 25 L1 22 Z" fill="#d65a24" />
              <path d="M6 6 H14 M6 12 H13 V18 H6" fill="none" stroke="#f4c9a8" strokeWidth="2" />
            </svg>
          </Slot>
          <Slot $ml={12}>
            <svg width="26" height="28" viewBox="0 0 26 28" fill="none" stroke="#fff" strokeWidth="3">
              <path d="M2 24 V3 H22 V14" />
              <rect x="14" y="16" width="10" height="9" fill="#fff" />
            </svg>
          </Slot>
          <Slot $ml={3} $mb={4}>
            <svg width="30" height="32" viewBox="0 0 30 32" fill="none" stroke="#c8c8c8" strokeWidth="2">
              <path d="M1 1 H29 V22 H20 L15 27 L10 22 H1 Z" />
            </svg>
          </Slot>
          <Slot $ml={-2}>
            <svg width="24" height="28" viewBox="0 0 24 28" fill="#fff">
              <path d="M4 2 L10 12 H0 Z M18 2 L24 12 H14 Z M12 16 L16 26 H8 Z" />
            </svg>
          </Slot>
        </PlayerTools>
        <Watermark>CSDN @pigpigpi</Watermark>
      </TaskBar>

      <LogoBox>
        <ImeGrid>
          <span>中</span>
          <span>°,</span>
          <svg width="22" height="34" viewBox="0 0 22 34">
            <circle cx="11" cy="9" r="7" fill="#a0a4a8" />
            <path d="M2 32 C2 18 20 18 20 32 Z" fill="#a0a4a8" />
          </svg>
          <svg width="28" height="34" viewBox="0 0 26 34">
            <path d="M16 1 C20 14 14 26 1 30 C12 36 25 28 25 15 C25 8 21 4 16 1 Z" fill="#3e86d0" />
          </svg>
          <svg width="32" height="30" viewBox="0 0 32 30">
            <rect x="1" y="1" width="30" height="28" rx="2" fill="#3e86d0" />
            <path d="M5 7 H27 M5 13 H27 M5 19 H27" stroke="#fff" strokeWidth="2" strokeDasharray="3 2" />
            <rect x="9" y="23" width="14" height="2" fill="#fff" />
          </svg>
          <span>全</span>
        </ImeGrid>
        <Brand>尚硅谷</Brand>
      </LogoBox>
      <BrandMark width="80" height="72" viewBox="0 0 80 72">
        <path d="M5 22 C4 42 14 60 34 66" fill="none" stroke="#1f6f66" strokeWidth="6" />
        <rect x="16" y="5" width="12" height="40" rx="4" fill="#e9a030" />
        <rect x="31" y="5" width="12" height="40" rx="4" fill="#e9a030" />
        <rect x="16" y="25" width="55" height="44" rx="10" fill="#f1f1ec" fillOpacity="0.9" />
        <path d="M30 17 L40 27 M52 15 L44 27" stroke="#f1f1ec" strokeWidth="4" />
        <path d="M38 40 L54 51 L38 66 C32 58 32 48 38 40 Z" fill="#1f6f66" />
      </BrandMark>
    </Frame>
  );
}
